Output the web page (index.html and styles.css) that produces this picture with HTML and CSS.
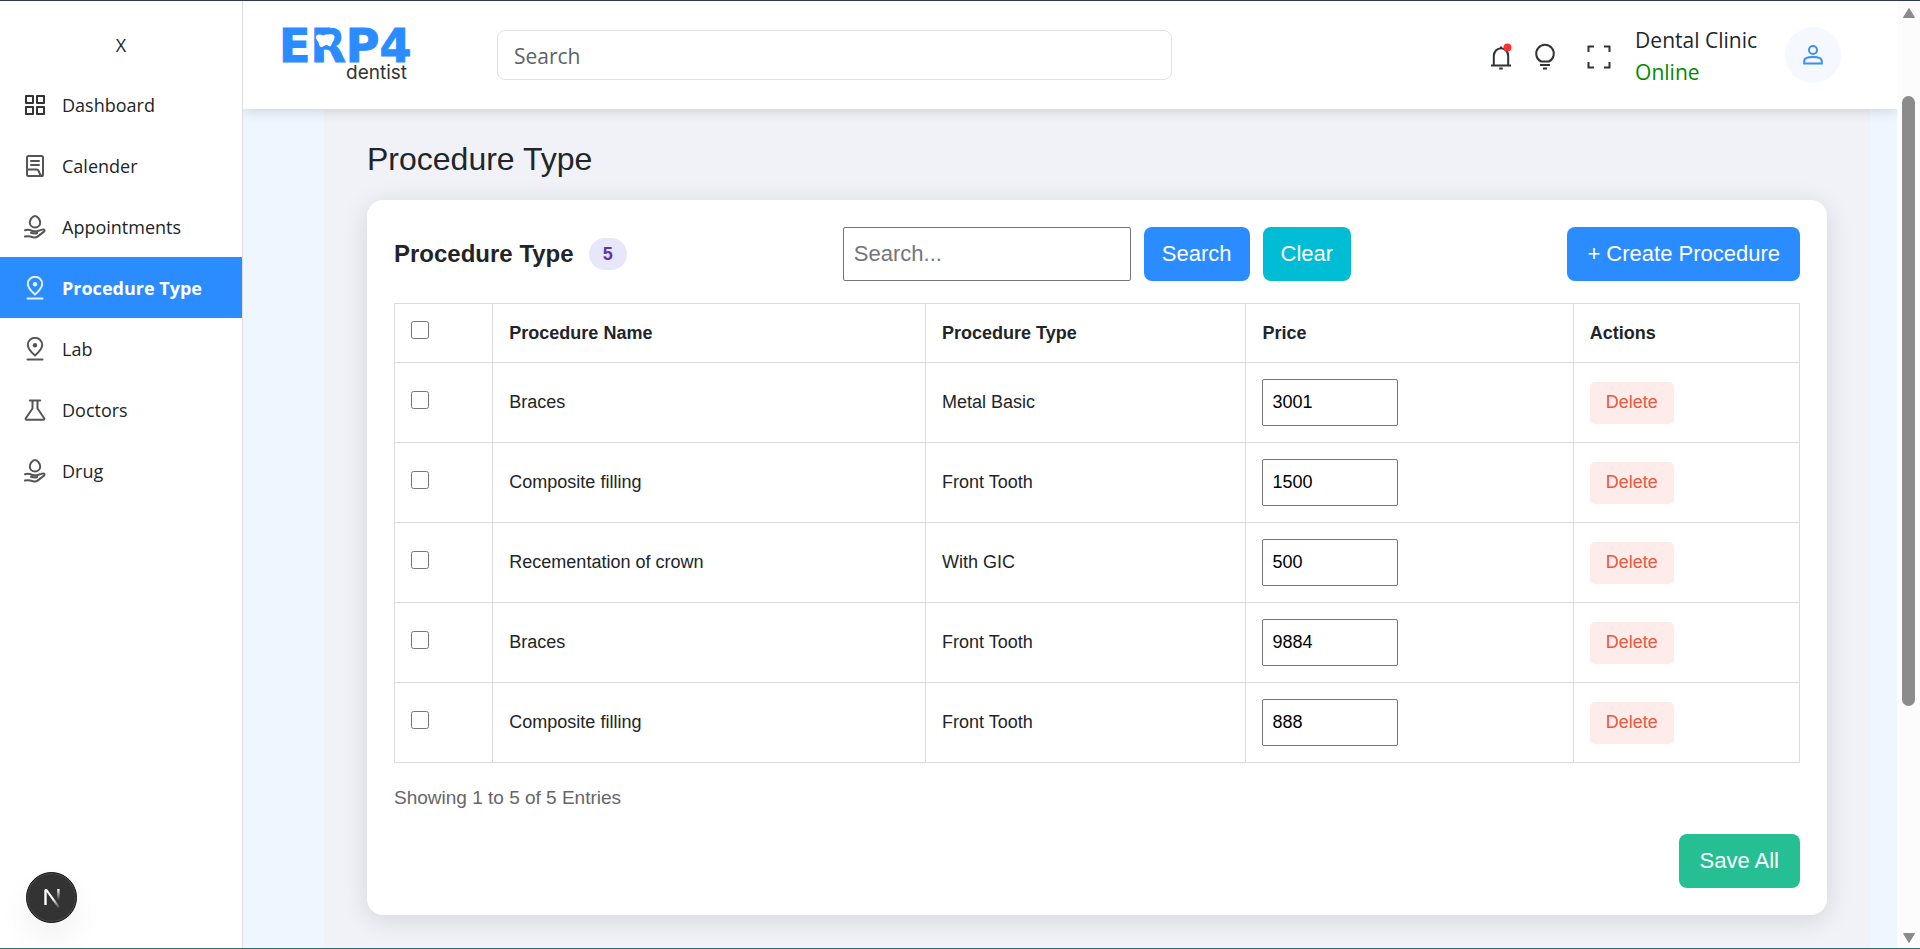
FILE: index.html
```
<!DOCTYPE html>
<html lang="en">
<head>
  <meta charset="UTF-8" />
  <meta name="viewport" content="width=device-width, initial-scale=1.0" />
  <title>ERP4 Dentist - Procedure Type</title>
  <link rel="stylesheet" href="styles.css">
</head>
<body>
  <svg class="icon-defs" aria-hidden="true">
    <symbol id="icon-grid" viewBox="0 0 24 24">
      <path d="M3 3h7v7H3zM14 3h7v7h-7zM3 14h7v7H3zM14 14h7v7h-7z" />
    </symbol>
    <symbol id="icon-note" viewBox="0 0 24 24">
      <path d="M20 17V3.500a1.500 1.500 0 0 0-1.500-1.500h-13A1.500 1.500 0 0 0 4 3.500v17A1.500 1.500 0 0 0 5.500 22H19a1 1 0 0 0 1-1v-4zM4 15.500h9.500c2 0 2.500 1.500 3 3.500.4 1.800 1.300 2.700 3 3M8 7h8M8 11h8" />
    </symbol>
    <symbol id="icon-hand" viewBox="0 0 24 24">
      <path d="M12 1C9.600 1 6.800 4.500 6.800 7.800a5.200 4.700 0 0 0 10.400 0C17.200 4.500 14.400 1 12 1zM2 15.300c2.500-.8 4.700-.6 6.500.4 1.800 1 3.800.2 5 .8 1.300.7.600 2-.8 2-1.700.1-3.200-.1-4.700-.7M13.800 16.200l5.400-1.600c2.200-.6 3.200 1.100 1.500 2.300l-6.200 4.700c-1.300 1-2.800 1-4.300.6-3-.9-5-1.200-8.200-.7" />
    </symbol>
    <symbol id="icon-pin" viewBox="0 0 24 24">
      <path d="M12 18.500c4.500-3.900 7.200-7.200 7.200-10.500a7.200 7.200 0 0 0-14.400 0c0 3.300 2.700 6.600 7.200 10.500zM4.500 22.500h15" />
      <circle class="icon-dot" cx="12" cy="8.300" r="2.200" />
    </symbol>
    <symbol id="icon-flask" viewBox="0 0 24 24">
      <path d="M6.800 2.500h10.400M9.500 2.500v8L2.800 20.200c-.5.900 0 1.600.9 1.600h16.600c.9 0 1.400-.7.900-1.600L14.500 10.500v-8" />
    </symbol>
  </svg>

  <div class="app-container">
    <aside class="sidebar">
      <button type="button" class="sidebar-close">X</button>
      <nav>
        <a href="#dashboard"><svg class="icon dark"><use href="#icon-grid" /></svg>Dashboard</a>
        <a href="#calender"><svg class="icon"><use href="#icon-note" /></svg>Calender</a>
        <a href="#appointments"><svg class="icon"><use href="#icon-hand" /></svg>Appointments</a>
        <a href="#procedure" class="active"><svg class="icon"><use href="#icon-pin" /></svg>Procedure Type</a>
        <a href="#lab"><svg class="icon"><use href="#icon-pin" /></svg>Lab</a>
        <a href="#doctors"><svg class="icon"><use href="#icon-flask" /></svg>Doctors</a>
        <a href="#drug"><svg class="icon"><use href="#icon-hand" /></svg>Drug</a>
      </nav>
    </aside>

    <div class="page">
      <header>
        <a href="#home" class="logo">
          <span class="logo-main">ERP4</span>
          <span class="logo-sub">dentist</span>
          <svg class="logo-tooth" viewBox="0 0 20 14">
            <path d="M1 2C2 0 5 0 8 1.200c2 .6 3 1 5 1C12 1.500 11 1 10 .8 14 0 19-.5 19.500 2.500 20 6 17 8 16.500 10.500c-.3 1.800-1.500 2.500-3.200 1.200-1.300-1-2.500-1-4 0C6.500 13.500 4.500 13.500 4 10 3.500 7 0 5 1 2z" />
          </svg>
        </a>
        <input type="search" class="header-search" placeholder="Search" aria-label="Search" />
        <div class="header-right">
          <button type="button" class="icon-btn bell" aria-label="Notifications">
            <svg viewBox="0 0 24 28">
              <path d="M2 22.500h20M4.800 22.500V13a7.200 7.700 0 0 1 14.400 0v9.500M12 5.500V3.500M10.200 25.500h3.600" />
              <circle cx="18.500" cy="4.500" r="4" />
            </svg>
          </button>
          <button type="button" class="icon-btn" aria-label="Theme">
            <svg viewBox="0 0 24 28">
              <path d="M8 18.500a8.800 8.800 0 1 1 8 0zM7 22h10M10 25.500h4" />
            </svg>
          </button>
          <button type="button" class="icon-btn fullscreen" aria-label="Full screen">
            <svg viewBox="0 0 24 24">
              <path d="M1.500 7V1.500H7M17 1.500h5.500V7M22.500 17v5.500H17M7 22.500H1.500V17" />
            </svg>
          </button>
          <div class="user">
            <span>Dental Clinic</span>
            <span class="status">Online</span>
          </div>
          <button type="button" class="avatar" aria-label="Account">
            <svg viewBox="0 0 20 20">
              <circle cx="10" cy="5" r="4" />
              <path d="M1.200 18.500v-2.600c0-2.600 4-4 8.800-4s8.800 1.400 8.800 4v2.600z" />
            </svg>
          </button>
        </div>
      </header>

      <main>
        <div class="panel">
          <h1>Procedure Type</h1>
          <section class="card">
            <div class="card-top">
              <h2>Procedure Type <span class="count">5</span></h2>
              <form class="search-form">
                <input type="text" placeholder="Search..." aria-label="Search procedures" />
                <button type="button" class="btn">Search</button>
                <button type="button" class="btn btn-clear">Clear</button>
              </form>
              <button type="button" class="btn btn-wide">+ Create Procedure</button>
            </div>
            <table>
              <thead>
                <tr>
                  <th class="col-check"><input type="checkbox" aria-label="Select all" /></th>
                  <th class="col-name">Procedure Name</th>
                  <th class="col-type">Procedure Type</th>
                  <th class="col-price">Price</th>
                  <th>Actions</th>
                </tr>
              </thead>
              <tbody>
                <tr>
                  <td><input type="checkbox" aria-label="Select row 1" /></td>
                  <td>Braces</td>
                  <td>Metal Basic</td>
                  <td><input type="text" class="price" value="3001" aria-label="Price 1" /></td>
                  <td><button type="button" class="btn-delete">Delete</button></td>
                </tr>
                <tr>
                  <td><input type="checkbox" aria-label="Select row 2" /></td>
                  <td>Composite filling</td>
                  <td>Front Tooth</td>
                  <td><input type="text" class="price" value="1500" aria-label="Price 2" /></td>
                  <td><button type="button" class="btn-delete">Delete</button></td>
                </tr>
                <tr>
                  <td><input type="checkbox" aria-label="Select row 3" /></td>
                  <td>Recementation of crown</td>
                  <td>With GIC</td>
                  <td><input type="text" class="price" value="500" aria-label="Price 3" /></td>
                  <td><button type="button" class="btn-delete">Delete</button></td>
                </tr>
                <tr>
                  <td><input type="checkbox" aria-label="Select row 4" /></td>
                  <td>Braces</td>
                  <td>Front Tooth</td>
                  <td><input type="text" class="price" value="9884" aria-label="Price 4" /></td>
                  <td><button type="button" class="btn-delete">Delete</button></td>
                </tr>
                <tr>
                  <td><input type="checkbox" aria-label="Select row 5" /></td>
                  <td>Composite filling</td>
                  <td>Front Tooth</td>
                  <td><input type="text" class="price" value="888" aria-label="Price 5" /></td>
                  <td><button type="button" class="btn-delete">Delete</button></td>
                </tr>
              </tbody>
            </table>
            <p class="entries">Showing 1 to 5 of 5 Entries</p>
            <div class="card-bottom">
              <button type="button" class="btn btn-wide btn-save">Save All</button>
            </div>
          </section>
        </div>
      </main>
    </div>

    <div class="scrollbar" aria-hidden="true">
      <svg viewBox="0 0 14 12"><path d="M7 1.500 12.500 10.500h-11z" /></svg>
      <div class="track"><div class="thumb"></div></div>
      <svg viewBox="0 0 14 12"><path d="M7 10.500 1.500 1.500h11z" /></svg>
    </div>
  </div>

  <button type="button" class="dev-badge" aria-label="Dev tools">
    <svg viewBox="0 0 20 22">
      <defs>
        <linearGradient id="fadeDiag" gradientUnits="userSpaceOnUse" x1="11" y1="12" x2="18" y2="21">
          <stop offset="0" stop-color="#fff" />
          <stop offset="1" stop-color="#fff" stop-opacity="0" />
        </linearGradient>
        <linearGradient id="fadeStem" gradientUnits="userSpaceOnUse" x1="0" y1="2" x2="0" y2="13">
          <stop offset="0" stop-color="#fff" />
          <stop offset="1" stop-color="#fff" stop-opacity="0" />
        </linearGradient>
      </defs>
      <path class="stem" d="M3.500 18V3" />
      <path d="M2.500 2H5L18 20l-1.800 1.200z" fill="url(#fadeDiag)" />
      <path d="M15.200 2h2.400v11h-2.400z" fill="url(#fadeStem)" />
    </svg>
  </button>
</body>
</html>
```
FILE: styles.css
```
* {
  box-sizing: border-box;
}
body {
  margin: 0;
  font-family: 'Liberation Sans', Arial, sans-serif;
  font-size: 18px;
  color: #212529;
  background: #fff;
}
button, input {
  font-family: inherit;
}
button {
  border: none;
  cursor: pointer;
}
a {
  color: inherit;
  text-decoration: none;
}
.icon-defs {
  display: none;
}
.app-container {
  display: flex;
  height: 100vh;
  overflow: hidden;
  border-top: 1px solid #2f3a4f;
  border-bottom: 1px solid #2b6f70;
}

/* sidebar */
.sidebar {
  position: relative;
  z-index: 2;
  flex: 0 0 243px;
  border-right: 1px solid #dcdcdc;
  background: #fff;
  font-family: 'Segoe UI', 'Open Sans', sans-serif;
  font-size: 18px;
}
.sidebar-close {
  display: block;
  width: 100%;
  height: 73px;
  padding: 14px 0 0;
  background: none;
  font-size: 18px;
  color: #212529;
}
.sidebar nav a {
  display: flex;
  align-items: center;
  gap: 15px;
  height: 61px;
  padding-left: 23px;
}
.sidebar nav a.active {
  background: #2b8cff;
  color: #fff;
  font-weight: bold;
}
.icon {
  width: 24px;
  height: 24px;
  overflow: visible;
  fill: none;
  stroke: #555;
  stroke-width: 2;
  stroke-linecap: round;
  stroke-linejoin: round;
  color: #555;
}
.icon.dark {
  stroke: #333;
}
.icon-dot {
  fill: currentColor;
  stroke: none;
}
.active .icon {
  stroke: #e6f1ff;
  color: #e6f1ff;
}

/* header */
.page {
  flex: 1;
  display: flex;
  flex-direction: column;
  min-width: 0;
  overflow: hidden;
}
header {
  position: relative;
  display: flex;
  align-items: center;
  flex: 0 0 108px;
  padding: 0 56px 0 36px;
  background: #fff;
  box-shadow: 0 2px 12px rgba(0, 0, 0, 0.15);
  font-family: 'Segoe UI', 'Open Sans', sans-serif;
}
.logo {
  position: relative;
  display: flex;
  flex-direction: column;
  width: 134px;
}
.logo-main {
  font-family: 'DejaVu Sans', sans-serif;
  font-size: 46px;
  font-weight: bold;
  line-height: 36px;
  color: #2b8cff;
  -webkit-text-stroke: 1px #2b8cff;
}
.logo-sub {
  padding-right: 6px;
  font-family: Inter, sans-serif;
  font-size: 19px;
  line-height: 18px;
  text-align: right;
  color: #333;
}
.logo-tooth {
  position: absolute;
  left: 36px;
  top: 6px;
  width: 20px;
  height: 14px;
  fill: #fff;
}
.header-search {
  flex: 0 1 675px;
  height: 50px;
  margin-left: 84px;
  padding: 2px 16px 0;
  border: 1px solid #dee2e6;
  border-radius: 8px;
  background: #fff;
  font-size: 21px;
  color: #212529;
}
.header-search::placeholder {
  color: #5c6369;
}
.header-right {
  display: flex;
  align-items: center;
  margin-left: auto;
}
.icon-btn {
  width: 24px;
  height: 28px;
  margin: 4px 20px 0 0;
  padding: 0;
  background: none;
}
.icon-btn svg {
  display: block;
  width: 24px;
  height: 28px;
  fill: none;
  stroke: #333;
  stroke-width: 2;
}
.icon-btn circle {
  fill: #fb3030;
  stroke: none;
}
.icon-btn.fullscreen {
  margin: 4px 24px 0 10px;
}
.user {
  display: flex;
  flex-direction: column;
  margin-right: 28px;
  padding-top: 2px;
  font-size: 21px;
  line-height: 32px;
}
.status {
  color: #008a00;
}
.avatar {
  display: flex;
  align-items: center;
  justify-content: center;
  width: 56px;
  height: 56px;
  padding: 0;
  border-radius: 50%;
  background: #f5f9ff;
}
.avatar svg {
  width: 20px;
  height: 20px;
  fill: none;
  stroke: #3a8ff0;
  stroke-width: 2;
}

/* content */
main {
  flex: 1;
  padding: 0 27px 0 81px;
  background: #eef7ff;
}
.panel {
  height: 100%;
  padding: 28px 43px 0;
  background: #f1f2f7;
}
h1 {
  margin: 0 0 19px;
  font-size: 32px;
  font-weight: normal;
  line-height: 44px;
}
.card {
  padding: 27px;
  border-radius: 16px;
  background: #fff;
  box-shadow: 0 5px 27px rgba(0, 0, 0, 0.12);
}
.card-top {
  display: flex;
  align-items: center;
  justify-content: space-between;
  margin-bottom: 22px;
}
h2 {
  display: flex;
  align-items: center;
  gap: 15px;
  margin: 0;
  font-size: 24px;
}
.count {
  padding: 0 14px;
  border-radius: 16px;
  background: #e8e6fb;
  font-size: 18px;
  line-height: 32px;
  color: #5e35b1;
}
.search-form {
  display: flex;
  gap: 13px;
}
.search-form input {
  width: 288px;
  height: 54px;
  padding: 0 10px;
  border: 1px solid #767676;
  border-radius: 2px;
  font-size: 22px;
}
.search-form input::placeholder {
  color: #757575;
}
.btn {
  height: 54px;
  padding: 0 18px;
  border-radius: 8px;
  background: #2b8cff;
  font-size: 22px;
  color: #fff;
}
.btn-wide {
  padding: 0 20px;
}
.btn-clear {
  background: #00bcd4;
}
.btn-save {
  padding: 0 21px;
  background: #26bf94;
}
table {
  width: 100%;
  table-layout: fixed;
  border-collapse: collapse;
}
th, td {
  height: 80px;
  padding: 0 16px;
  border: 1px solid #dcdcdc;
  text-align: left;
}
th {
  height: 59px;
}
.col-check {
  width: 7%;
}
.col-name {
  width: 30.8%;
}
.col-type {
  width: 22.8%;
}
.col-price {
  width: 23.3%;
}
input[type="checkbox"] {
  display: block;
  width: 18px;
  height: 18px;
  margin: 0 0 6px;
}
.price {
  width: 136px;
  height: 47px;
  padding: 0 9px;
  border: 1px solid #767676;
  border-radius: 2px;
  font-size: 18px;
}
.btn-delete {
  height: 42px;
  padding: 0 16px;
  border-radius: 5px;
  background: #fdecea;
  font-size: 18px;
  color: #eb5741;
}
.entries {
  margin: 22px 0 23px;
  font-size: 19px;
  line-height: 26px;
  color: #666;
}
.card-bottom {
  display: flex;
  justify-content: flex-end;
}

/* scrollbar column */
.scrollbar {
  display: flex;
  flex-direction: column;
  align-items: center;
  flex: 0 0 23px;
  padding: 6px 0 4px;
  background: #fcfcfc;
}
.scrollbar svg {
  width: 16px;
  height: 12px;
  fill: #8b8b8b;
  stroke: #8b8b8b;
  stroke-linejoin: round;
}
.track {
  flex: 1;
  padding-top: 77px;
}
.thumb {
  width: 13px;
  height: 73%;
  border-radius: 7px;
  background: #8b8b8b;
}

.dev-badge {
  position: fixed;
  z-index: 3;
  left: 26px;
  bottom: 26px;
  display: flex;
  align-items: center;
  justify-content: center;
  width: 51px;
  height: 51px;
  padding: 0;
  border: 1px solid #111;
  border-radius: 50%;
  background: #333;
  box-shadow: inset 0 0 0 1px #4a4a4a, 0 16px 32px rgba(0, 0, 0, 0.06);
}
.dev-badge svg {
  width: 20px;
  height: 22px;
}
.dev-badge .stem {
  stroke: #fff;
  stroke-width: 2.4;
}
```
